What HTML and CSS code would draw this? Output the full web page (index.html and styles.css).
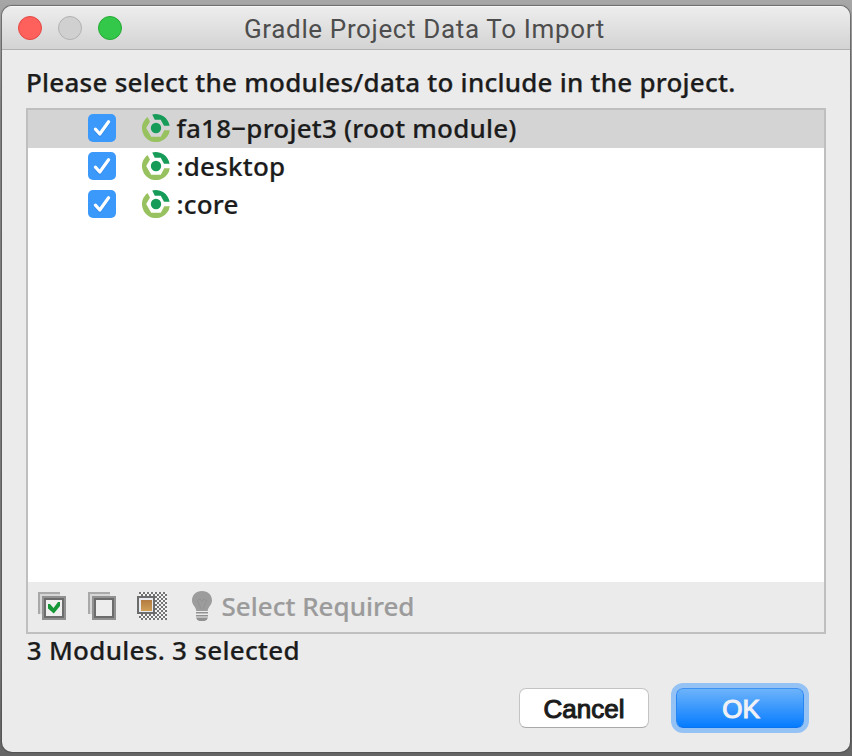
FILE: index.html
```html
<!DOCTYPE html>
<html lang="en">
<head>
<meta charset="utf-8">
<title>Gradle Project Data To Import</title>
<link rel="stylesheet" href="styles.css">
</head>
<body>
<svg class="defs" width="0" height="0" aria-hidden="true">
  <symbol id="check" viewBox="0 0 28 28">
    <path d="M7.4 15.2 L11.8 20 L20.6 7.8" fill="none" stroke="#1668c4" stroke-opacity=".4" stroke-width="3.2" stroke-linecap="round" stroke-linejoin="round" transform="translate(0 1)"/>
    <path d="M7.4 15.2 L11.8 20 L20.6 7.8" fill="none" stroke="#fff" stroke-width="3.2" stroke-linecap="round" stroke-linejoin="round"/>
  </symbol>
  <symbol id="module" viewBox="0 0 28 28">
    <path d="M5.5 3 L8 7.5 L4.2 14 L9.2 22.7 H18.8 L22.3 16.2 H27.8 A14 14 0 1 1 5.5 3 Z" fill="#98c160"/>
    <path d="M10.2 .5 A14 14 0 0 1 27.6 11.8 H22 L18.7 5.7 H12.8 Z" fill="#169c58"/>
    <circle cx="14" cy="14" r="5.2" fill="#169c58"/>
  </symbol>
</svg>
<main class="window">
  <header class="titlebar">
    <span class="lights"><i class="light close"></i><i class="light minimise"></i><i class="light zoom"></i></span>
    <h1 class="title">Gradle Project Data To Import</h1>
  </header>
  <section class="content">
    <p class="prompt">Please select the modules/data to include in the project.</p>
    <div class="panel">
      <ul class="modules">
        <li class="row selected"><span class="checkbox"><svg><use href="#check"/></svg></span><svg class="module"><use href="#module"/></svg><span class="name">fa18−projet3 (root module)</span></li>
        <li class="row"><span class="checkbox"><svg><use href="#check"/></svg></span><svg class="module"><use href="#module"/></svg><span class="name">:desktop</span></li>
        <li class="row"><span class="checkbox"><svg><use href="#check"/></svg></span><svg class="module"><use href="#module"/></svg><span class="name">:core</span></li>
      </ul>
      <div class="toolbar">
        <svg class="tool" width="28" height="28" viewBox="0 0 28 28" shape-rendering="crispEdges">
          <path d="M0 0H22V2H2V22H0Z" fill="#a9a9a9"/><path d="M2 2H22V4H4V22H2Z" fill="#d6d6d6"/>
          <rect x="4" y="4" width="24" height="24" fill="#919191"/><rect x="6" y="6" width="20" height="20" fill="#6c6c6c"/><rect x="8" y="8" width="16" height="16" fill="#efefef"/>
          <path d="M10 12 L12 12 L15.5 16 L20 10 H22 V14 L15.8 21.5 L10 16.5Z" fill="#159637" shape-rendering="auto"/>
        </svg>
        <svg class="tool second" width="28" height="28" viewBox="0 0 28 28" shape-rendering="crispEdges">
          <path d="M0 0H22V2H2V22H0Z" fill="#a9a9a9"/><path d="M2 2H22V4H4V22H2Z" fill="#d6d6d6"/>
          <rect x="4" y="4" width="24" height="24" fill="#919191"/><rect x="6" y="6" width="20" height="20" fill="#6c6c6c"/><rect x="8" y="8" width="16" height="16" fill="#ededed"/>
        </svg>
        <svg class="tool third" width="30" height="28" viewBox="0 0 30 28" shape-rendering="crispEdges">
          <defs>
            <pattern id="dots" width="4" height="4" patternUnits="userSpaceOnUse"><path d="M2 0h2v2h-2zM0 2h2v2h-2z" fill="#747474"/></pattern>
            <linearGradient id="amber" x1="0" y1="0" x2="0" y2="1"><stop offset="0" stop-color="#b47b42"/><stop offset="1" stop-color="#cf9f56"/></linearGradient>
          </defs>
          <rect x="2" width="28" height="28" fill="#f4f4f4"/><rect x="2" width="28" height="28" fill="url(#dots)"/>
          <rect y="4" width="18" height="18" fill="#6c6c6c"/><rect x="2" y="6" width="14" height="14" fill="#e9eaf0"/><rect x="4" y="8" width="11" height="11" fill="url(#amber)"/>
        </svg>
        <svg class="bulb" width="20" height="30" viewBox="0 0 20 30">
          <path d="M10 0 C4 0 0 4 0 9.6 C0 14 4 16 4.3 20 H15.7 C16 16 20 14 20 9.6 C20 4 16 0 10 0Z" fill="#9c9c9c"/>
          <path d="M9 18 L5.2 9.5 L8 8 L10 10.5 L12 8 L14.8 9.5 L11 18" fill="none" stroke="#909090" stroke-width=".8"/>
          <path d="M4 21H16V22.5H4ZM4 24H16V25.5H4ZM4 26.5H16Q15.5 29 12.5 30H7.5Q4.5 29 4 26.5Z" fill="#919191"/>
        </svg>
        <span class="required">Select Required</span>
      </div>
    </div>
    <p class="status">3 Modules. 3 selected</p>
    <footer class="actions">
      <button class="button" type="button">Cancel</button>
      <button class="button primary" type="button">OK</button>
    </footer>
  </section>
</main>
</body>
</html>
```
FILE: styles.css
```css
* { box-sizing: border-box; }
html, body { height: 100%; }
body {
  margin: 0;
  padding: 6px 2px 4px;
  overflow: hidden;
  background: linear-gradient(#a7a7a7, #858585 15%, #777 85%, #656565);
  font: 500 26px/38px "Noto Sans", sans-serif;
  color: #1c1c1c;
}
.defs { position: absolute; }
p, h1, ul { margin: 0; padding: 0; }
p, span { white-space: nowrap; }
.window {
  height: 746px;
  display: flex;
  flex-direction: column;
  border-radius: 10px;
  background: #ebebeb;
  overflow: hidden;
  box-shadow: 0 0 1px 1px rgba(70, 70, 70, .6);
}
.titlebar {
  display: grid;
  grid-template-columns: 242px 1fr;
  align-items: center;
  height: 44px;
  background: linear-gradient(#ededed, #d3d3d3);
  border-top: 1px solid #f7f7f7;
  border-bottom: 1px solid #b1b1b1;
}
.lights { display: flex; gap: 16px; padding-left: 16px; }
.light { width: 24px; height: 24px; border-radius: 50%; border: 1px solid; }
.close { background: #fe605c; border-color: #e34844; }
.minimise { background: #d0d0d0; border-color: #b1b1b1; }
.zoom { background: #34c84a; border-color: #25a934; }
.title {
  padding-top: 2px;
  font: 400 26px/38px Roboto, sans-serif;
  color: #4d4d4d;
  letter-spacing: .64px;
  white-space: nowrap;
}
.content { display: flex; flex-direction: column; flex: 1; padding: 13px 24px 0; }
.prompt { height: 45px; letter-spacing: .235px; -webkit-text-stroke: .25px currentColor; }
.panel {
  height: 526px;
  display: flex;
  flex-direction: column;
  border: 2px solid #bfbfbf;
  background: #fff;
}
.modules { flex: 1; list-style: none; }
.row { display: flex; align-items: center; height: 38px; padding: 0 0 2px 60px; }
.selected { background: #d4d4d4; }
.checkbox {
  width: 28px;
  height: 28px;
  margin-right: 26px;
  border-radius: 5px;
  background: #3c99fc;
}
.checkbox svg, .module { display: block; width: 28px; height: 28px; flex: none; }
.module { margin-right: 6.5px; }
.name { letter-spacing: .2px; }
.toolbar { display: flex; align-items: center; height: 50px; padding: 0 0 2px 10px; background: #ebebeb; color: #9b9b9b; }
.tool { flex: none; }
.second { margin-left: 22px; }
.third { margin-left: 21px; }
.bulb { margin: 0 9.5px 0 25px; }
.name, .required, .status { -webkit-text-stroke: .2px currentColor; }
.status { height: 38px; margin-top: -3px; padding-left: .7px; letter-spacing: .29px; }
.actions { display: flex; justify-content: flex-end; gap: 27px; padding: 19px 22px 0 0; }
.button {
  width: 130px;
  height: 40px;
  padding: 2px 0 0;
  border: 1px solid #c4c4c4;
  border-bottom-color: #a9a9a9;
  border-radius: 7px;
  background: #fff;
  color: #1c1c1c;
  font: 400 26px/36px "Liberation Sans", sans-serif;
  -webkit-text-stroke: 1.1px currentColor;
}
.primary {
  width: 128px;
  padding-left: 2px;
  border-color: #3d91f3 #2585f2 #0b73ef;
  background: linear-gradient(#6db3fa, #067cff);
  color: #f0f1f5;
  box-shadow: 0 0 0 5px #94c2f5;
}
```
